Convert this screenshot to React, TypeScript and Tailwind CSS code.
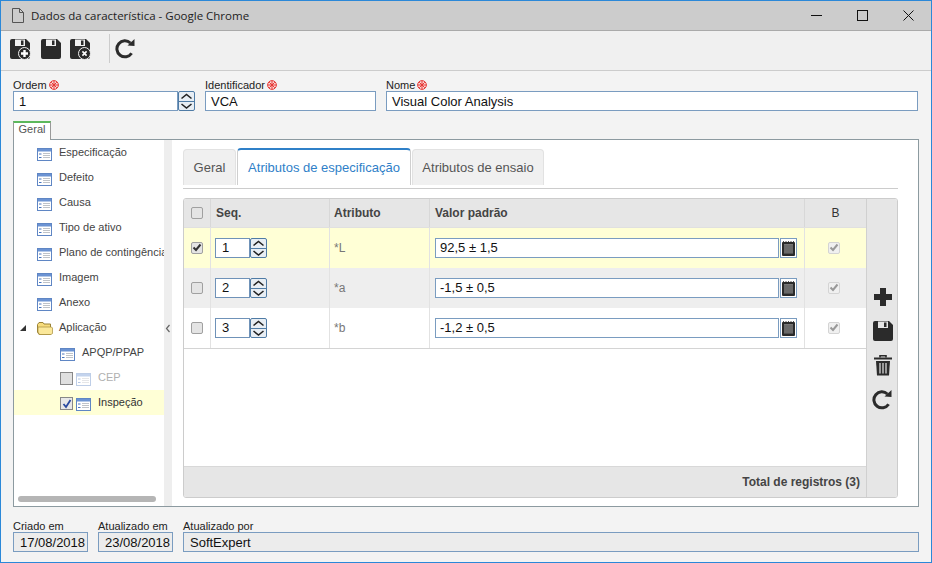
const Floppy = () => (
  <svg className="block" width="20" height="20" viewBox="0 0 20 20">
    <path
      fillRule="evenodd"
      d="M2 0H16L20 4V18a2 2 0 0 1-2 2H2a2 2 0 0 1-2-2V2a2 2 0 0 1 2-2ZM5 0.5V7H15V0.5ZM11 1.5H13.5V6H11Z"
      fill="#2b2b2b"
    />
  </svg>
);

const FloppyBadge = ({ kind }: { kind: "plus" | "x" }) => (
  <span className="relative block w-[20px] h-[20px]">
    <Floppy />
    <svg className="absolute left-[8px] top-[8px]" width="13" height="13" viewBox="0 0 13 13">
      <circle cx="6.5" cy="6.5" r="6" fill="#2b2b2b" stroke="#f0f0f0" strokeWidth="1" />
      {kind === "plus" ? (
        <path d="M3 6.5H10M6.5 3V10" stroke="#fff" strokeWidth="2.4" />
      ) : (
        <path d="M4.4 4.4L8.6 8.6M8.6 4.4L4.4 8.6" stroke="#fff" strokeWidth="1.6" />
      )}
    </svg>
  </span>
);

const Refresh = () => (
  <svg className="block" width="21" height="21" viewBox="0 0 21 21" fill="none">
    <path d="M16.6 15.2A8 8 0 1 1 15.4 5" stroke="#2b2b2b" strokeWidth="3" />
    <path d="M12.5 7.5L19.5 8V1Z" fill="#2b2b2b" />
  </svg>
);

const Required = () => (
  <svg className="inline-block ml-[2px] align-[-1px]" width="10" height="10" viewBox="0 0 10 10" fill="none">
    <circle cx="5" cy="5" r="4.4" fill="#fbdcdc" stroke="#e53935" strokeWidth="1" />
    <path d="M5 1V9M1 5H9M2.2 2.2L7.8 7.8M7.8 2.2L2.2 7.8" stroke="#e53935" strokeWidth="1" />
  </svg>
);

const Spinner = () => (
  <div className="flex flex-col w-[17px] h-[20px] border border-[#4f7ba5] rounded-[2px] bg-[#e8eef4] shrink-0">
    <svg className="block h-[10px] w-full border-b border-[#4f7ba5]" viewBox="0 0 15 9" fill="none">
      <path d="M2.5 6.5L7.5 2.5L12.5 6.5" stroke="#222" strokeWidth="1.6" />
    </svg>
    <svg className="block h-[8px] w-full" viewBox="0 0 15 8" fill="none">
      <path d="M2.5 2L7.5 6L12.5 2" stroke="#222" strokeWidth="1.6" />
    </svg>
  </div>
);

const ListIcon = ({ faded }: { faded?: boolean }) => (
  <svg className={faded ? "block opacity-40 shrink-0" : "block shrink-0"} width="15" height="13" viewBox="0 0 15 13">
    <rect x="0.5" y="0.5" width="14" height="12" fill="#fff" stroke="#5f86c4" />
    <rect x="1" y="1" width="13" height="2.5" fill="#6b93d3" />
    <path d="M2 6H4.5M2 9.5H4.5" stroke="#4a76bd" strokeWidth="1.2" />
    <path d="M6 5.5H13M6 7.5H13M6 9.5H13" stroke="#b8bcc2" strokeWidth="0.9" />
  </svg>
);

const Folder = () => (
  <svg className="block shrink-0" width="16" height="13" viewBox="0 0 16 13">
    <path d="M0.5 2.5L2 0.5H6L7 2H13.5V12.5H2L0.5 10Z" fill="#f7dc7c" stroke="#9a8236" />
    <path d="M1 5H14.5L15.5 6V11.5L14 12.5H2.5L1 10Z" fill="#fbe89a" stroke="#a68c3c" strokeWidth="0.7" />
  </svg>
);

const TreeRow = ({ label }: { label: string }) => (
  <div className="h-[25px] flex items-start pl-[23px] overflow-hidden">
    <span className="mt-[8px]">
      <ListIcon />
    </span>
    <span className="ml-[7px] mt-[4px] whitespace-nowrap text-[#444]">{label}</span>
  </div>
);

const NoteButton = () => (
  <div className="w-[17px] h-[20px] border border-[#7a9cc0] bg-white flex items-center justify-center shrink-0">
    <svg className="block" width="13" height="15" viewBox="0 0 13 15">
      <rect x="0" y="1" width="13" height="14" rx="1" fill="#2a2a2a" />
      <path d="M2 3H11V12.5H2Z" fill="#777" />
      <path d="M2 5H11M2 7H11M2 9H11M2 11H11" stroke="#555" strokeWidth="0.8" />
      <path d="M1.5 0V2M4 0V2M6.5 0V2M9 0V2M11.5 0V2" stroke="#2a2a2a" strokeWidth="0.8" />
    </svg>
  </div>
);

const Check = ({ checked, disabled }: { checked?: boolean; disabled?: boolean }) => (
  <div
    className={
      disabled
        ? "w-[12px] h-[12px] rounded-[2px] border border-[#d4d4d4] bg-[#f0f0f0] flex items-center justify-center"
        : "w-[12px] h-[12px] rounded-[2px] border border-[#a0a0a0] bg-[#e4e4e4] flex items-center justify-center"
    }
  >
    {checked && (
      <svg className="block" width="10" height="9" viewBox="0 0 10 9" fill="none">
        <path d="M1.5 4.5L4 7L8.5 1.5" stroke={disabled ? "#999" : "#333"} strokeWidth="2" />
      </svg>
    )}
  </div>
);

const rows = [
  { seq: "1", attr: "*L", value: "92,5 ± 1,5", checked: true, bg: "bg-[#ffffd6]" },
  { seq: "2", attr: "*a", value: "-1,5 ± 0,5", checked: false, bg: "bg-[#eeeeee]" },
  { seq: "3", attr: "*b", value: "-1,2 ± 0,5", checked: false, bg: "bg-white" },
];

const Field = ({ label, value, required, className }: { label: string; value: string; required?: boolean; className: string }) => (
  <div className={className}>
    <div className="h-[13px] leading-[15px] text-[11px] text-[#222] whitespace-nowrap">
      {label}
      {required && <Required />}
    </div>
    <div className="h-[20px] border border-[#7a9cc0] bg-white pl-[5px] text-[13px] leading-[19px] text-[#111]">{value}</div>
  </div>
);

const ReadOnly = ({ label, value, className }: { label: string; value: string; className: string }) => (
  <div className={className}>
    <div className="h-[13px] leading-[15px] text-[11px] text-[#222] whitespace-nowrap">{label}</div>
    <div className="h-[20px] border border-[#7a9cc0] bg-[#ececec] pl-[6px] text-[13px] leading-[19px] text-[#111] whitespace-nowrap">{value}</div>
  </div>
);

export default function App() {
  return (
    <div className="w-[932px] h-[563px] flex flex-col overflow-hidden bg-[#f3f3f3] border border-[#2b88d8] font-['Liberation_Sans',Arial,sans-serif] text-[12px]">
      {/* title bar */}
      <div className="h-[30px] shrink-0 flex items-center bg-[#cccccc] border-b border-[#aaaaaa] pl-[11px]">
        <svg width="12" height="15" viewBox="0 0 12 15" fill="none">
          <path d="M0.5 0.5H7.5L11.5 4.5V14.5H0.5ZM7.5 0.5V4.5H11.5" stroke="#555" />
        </svg>
        <span className="ml-[7px] text-[#222] text-[11.5px] font-['Open_Sans',sans-serif]">Dados da característica - Google Chrome</span>
        <div className="ml-auto flex items-center text-black">
          <svg width="11" height="11" viewBox="0 0 11 11" className="mr-[35px]">
            <path d="M0 5.5H11" stroke="#111" />
          </svg>
          <svg width="11" height="11" viewBox="0 0 11 11" className="mr-[35px]" fill="none">
            <rect x="0.5" y="0.5" width="10" height="10" stroke="#111" />
          </svg>
          <svg width="11" height="11" viewBox="0 0 11 11" className="mr-[17px]">
            <path d="M0.5 0.5L10.5 10.5M10.5 0.5L0.5 10.5" stroke="#111" />
          </svg>
        </div>
      </div>

      {/* toolbar */}
      <div className="h-[40px] shrink-0 flex items-center bg-[#f0f0f0] border-b border-[#cccccc] pl-[9px] pb-[4px]">
        <FloppyBadge kind="plus" />
        <span className="ml-[11px]"><Floppy /></span>
        <span className="ml-[9px]"><FloppyBadge kind="x" /></span>
        <div className="ml-[19px] w-px h-[29px] bg-[#cccccc]" />
        <span className="ml-[5px]"><Refresh /></span>
      </div>

      {/* form header */}
      <div className="flex pl-[12px] pr-[13px] mt-[7px] h-[33px] shrink-0">
        <div className="w-[182px] shrink-0">
          <div className="h-[13px] leading-[15px] text-[11px] text-[#222]">
            Ordem
            <Required />
          </div>
          <div className="flex">
            <div className="w-[165px] h-[20px] border border-[#7a9cc0] bg-white pl-[5px] text-[13px] leading-[19px] text-[#111]">1</div>
            <Spinner />
          </div>
        </div>
        <Field label="Identificador" value="VCA" required className="ml-[10px] w-[171px] shrink-0" />
        <Field label="Nome" value="Visual Color Analysis" required className="ml-[10px] flex-1" />
      </div>

      {/* outer tab */}
      <div className="h-[19px] mt-[10px] pl-[12px] shrink-0 flex">
        <div className="w-[38px] h-[19px] z-10 bg-white border border-b-0 border-[#999] border-t-2 border-t-[#5cb85c] text-center leading-[13px] text-[#555] text-[11px]">
          Geral
        </div>
      </div>

      {/* main panel */}
      <div className="mx-[12px] mt-[-1px] h-[368px] shrink-0 flex border border-[#8c9aa0] bg-white">
        {/* tree */}
        <div className="relative w-[150px] shrink-0 text-[11px]">
          <TreeRow label="Especificação" />
          <TreeRow label="Defeito" />
          <TreeRow label="Causa" />
          <TreeRow label="Tipo de ativo" />
          <TreeRow label="Plano de contingência" />
          <TreeRow label="Imagem" />
          <TreeRow label="Anexo" />
          <div className="h-[25px] flex items-start pl-[6px]">
            <svg className="block mt-[10px]" width="6" height="6" viewBox="0 0 6 6">
              <path d="M6 0V6H0Z" fill="#333" />
            </svg>
            <span className="ml-[11px] mt-[7px]"><Folder /></span>
            <span className="ml-[6px] mt-[4px] text-[#444]">Aplicação</span>
          </div>
          <div className="h-[25px] flex items-start pl-[46px]">
            <span className="mt-[8px]"><ListIcon /></span>
            <span className="ml-[7px] mt-[4px] text-[#444]">APQP/PPAP</span>
          </div>
          <div className="h-[25px] flex items-start pl-[46px]">
            <div className="mt-[7px] w-[13px] h-[13px] border border-[#888] bg-[#e0e0e0]" />
            <span className="ml-[3px] mt-[8px]"><ListIcon faded /></span>
            <span className="ml-[7px] mt-[4px] text-[#b0b0b0]">CEP</span>
          </div>
          <div className="h-[25px] flex items-start pl-[46px] bg-[#ffffd6]">
            <div className="mt-[7px] w-[13px] h-[13px] border border-[#888] bg-[#e8e8e8] flex items-center justify-center">
              <svg className="block" width="10" height="10" viewBox="0 0 10 10" fill="none">
                <path d="M1.5 5L4 8L8.5 1" stroke="#2a4aa0" strokeWidth="1.8" />
              </svg>
            </div>
            <span className="ml-[3px] mt-[8px]"><ListIcon /></span>
            <span className="ml-[7px] mt-[4px] text-[#333]">Inspeção</span>
          </div>
          <div className="absolute left-[4px] bottom-[4px] w-[138px] h-[6px] rounded-[3px] bg-[#b5b5b5]" />
        </div>

        {/* splitter */}
        <div className="w-[8px] shrink-0 bg-[#eeeeee] relative">
          <svg className="absolute left-[1px] top-[184px]" width="6" height="9" viewBox="0 0 6 9" fill="none">
            <path d="M4.5 1L1.5 4.5L4.5 8" stroke="#666" strokeWidth="1.2" />
          </svg>
        </div>

        {/* content */}
        <div className="flex-1 pl-[11px] pr-[20px] pt-[8px] min-w-0">
          <div className="flex items-end h-[41px] border-b border-[#cccccc] pb-[3px]">
            <div className="w-[53px] h-[36px] flex items-center justify-center bg-[#f0f0f0] border border-b-0 border-[#e2e2e2] rounded-t-[4px] text-[13px] text-[#555]">Geral</div>
            <div className="ml-[1px] w-[174px] h-[37px] flex items-center justify-center bg-white border border-b-0 border-[#cfcfcf] border-t-2 border-t-[#2f80c8] rounded-t-[4px] text-[13px] text-[#2f80c8]">Atributos de especificação</div>
            <div className="ml-[1px] w-[132px] h-[36px] flex items-center justify-center bg-[#f0f0f0] border border-b-0 border-[#e2e2e2] rounded-t-[4px] text-[13px] text-[#555]">Atributos de ensaio</div>
          </div>

          {/* grid */}
          <div className="mt-[9px] h-[300px] flex border border-[#cccccc] rounded-[3px] overflow-hidden">
            <div className="flex-1 flex flex-col min-w-0">
              <div className="h-[29px] shrink-0 flex bg-[#e6e6e6] font-bold text-[#444] border-b border-[#e0e0e0]">
                <div className="w-[27px] border-r border-[#d8d8d8] flex items-center justify-center"><Check /></div>
                <div className="w-[119px] border-r border-[#d8d8d8] flex items-center pl-[5px]">Seq.</div>
                <div className="w-[100px] border-r border-[#d8d8d8] flex items-center pl-[4px]">Atributo</div>
                <div className="w-[375px] border-r border-[#d8d8d8] flex items-center pl-[5px]">Valor padrão</div>
                <div className="flex-1 flex items-center justify-center font-normal text-[#333]">B</div>
              </div>
              {rows.map((r) => (
                <div key={r.seq} className={`h-[40px] shrink-0 flex ${r.bg}`}>
                  <div className="w-[27px] border-r border-[#e2e2e2] flex items-center justify-center pb-px">
                    <Check checked={r.checked} />
                  </div>
                  <div className="w-[119px] border-r border-[#e2e2e2] flex items-center pl-[4px]">
                    <div className="w-[35px] h-[20px] border border-[#6f92b8] bg-white pl-[6px] text-[13px] leading-[18px] text-[#111]">{r.seq}</div>
                    <Spinner />
                  </div>
                  <div className="w-[100px] border-r border-[#e2e2e2] flex items-center pl-[4px] text-[#777]">{r.attr}</div>
                  <div className="w-[375px] border-r border-[#e2e2e2] flex items-center pl-[5px]">
                    <div className="w-[344px] h-[20px] border border-[#7a9cc0] bg-white pl-[4px] text-[13px] leading-[18px] text-[#111]">{r.value}</div>
                    <span className="ml-px"><NoteButton /></span>
                  </div>
                  <div className="flex-1 flex items-center justify-center pr-[4px] pb-px">
                    <Check checked disabled />
                  </div>
                </div>
              ))}
              <div className="flex-1 border-t border-[#d4d4d4] bg-white" />
              <div className="h-[31px] shrink-0 flex items-center justify-end pr-[6px] bg-[#e6e6e6] border-t border-[#d8d8d8] font-bold text-[#444]">
                Total de registros (3)
              </div>
            </div>
            <div className="w-[31px] shrink-0 bg-[#e6e6e6] border-l border-[#d0d0d0] flex flex-col items-center pt-[89px] pl-px">
              <svg className="block" width="18" height="18" viewBox="0 0 18 18">
                <path d="M6 0H12V6H18V12H12V18H6V12H0V6H6Z" fill="#2b2b2b" />
              </svg>
              <span className="mt-[15px]"><Floppy /></span>
              <svg className="block mt-[14px]" width="18" height="21" viewBox="0 0 18 21" fill="none">
                <path d="M0 3.5H18" stroke="#2b2b2b" strokeWidth="2" />
                <path d="M6 2.5V0.8H12V2.5" stroke="#2b2b2b" strokeWidth="1.6" />
                <path d="M2 6H16L15 20.5H3Z" fill="#2b2b2b" />
                <path d="M6 8V18.5M9 8V18.5M12 8V18.5" stroke="#e6e6e6" strokeWidth="1.2" />
              </svg>
              <span className="mt-[13px]"><Refresh /></span>
            </div>
          </div>
        </div>
      </div>

      {/* footer */}
      <div className="flex pl-[12px] pr-[12px] mt-[12px] h-[33px] shrink-0 gap-[10px]">
        <ReadOnly label="Criado em" value="17/08/2018" className="w-[75px] shrink-0" />
        <ReadOnly label="Atualizado em" value="23/08/2018" className="w-[75px] shrink-0" />
        <ReadOnly label="Atualizado por" value="SoftExpert" className="flex-1" />
      </div>
    </div>
  );
}
